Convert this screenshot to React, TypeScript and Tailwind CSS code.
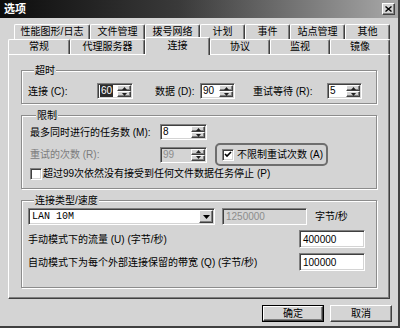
import type { ReactNode } from "react";

const sunken =
  "border border-[#808080] border-r-white border-b-white shadow-[inset_1px_1px_0_#404040,inset_-1px_-1px_0_#d4d4d4]";
const raised =
  "border border-white border-r-[#404040] border-b-[#404040] shadow-[inset_-1px_-1px_0_#808080]";

function Arrow({ up }: { up?: boolean }) {
  return (
    <svg width="5" height="3" viewBox="0 0 5 3">
      <path d={up ? "M2.5 0 L5 3 L0 3 Z" : "M0 0 L5 0 L2.5 3 Z"} fill="#202020" />
    </svg>
  );
}

function Spin({
  value,
  className,
  selected,
  disabled,
}: {
  value: string;
  className: string;
  selected?: boolean;
  disabled?: boolean;
}) {
  return (
    <div className={`flex h-[16px] ${className} ${sunken} ${disabled ? "bg-[#d4d4d4]" : "bg-white"}`}>
      <div className="flex flex-1 items-center pl-[2px] text-[10px] leading-none">
        <span
          className={
            selected
              ? "bg-[#2b2b2b] px-[1px] py-[1px] text-white"
              : disabled
                ? "text-[#8c8c8c]"
                : "text-black"
          }
        >
          {value}
        </span>
      </div>
      <div className="flex w-[15px] flex-col py-[1px] pr-[1px]">
        <div className={`flex flex-1 items-center justify-center bg-[#d4d4d4] ${raised}`}>
          <Arrow up />
        </div>
        <div className={`flex flex-1 items-center justify-center bg-[#d4d4d4] ${raised}`}>
          <Arrow />
        </div>
      </div>
    </div>
  );
}

function Check({ checked }: { checked?: boolean }) {
  return (
    <div className={`flex h-[12px] w-[12px] shrink-0 items-center justify-center bg-white ${sunken}`}>
      {checked && (
        <svg width="8" height="7" viewBox="0 0 8 7">
          <path d="M1 3 L3 5 L7 1" stroke="#000" strokeWidth="1.6" fill="none" />
        </svg>
      )}
    </div>
  );
}

function Group({ title, className, children }: { title: string; className: string; children: ReactNode }) {
  return (
    <fieldset
      className={`mx-[12px] border border-[#8c8c8c] shadow-[1px_1px_0_#fff,inset_1px_1px_0_#fff] ${className}`}
    >
      <legend className="ml-[6px] bg-[#d4d4d4] px-[1px] text-[10px] leading-[13px]">{title}</legend>
      {children}
    </fieldset>
  );
}

function Tab({ label, className, active }: { label: string; className: string; active?: boolean }) {
  return (
    <div
      className={`flex items-center justify-center rounded-t-[2px] border-t border-l border-r border-t-white border-l-white border-r-[#404040] bg-[#d4d4d4] text-[10px] leading-none shadow-[inset_-1px_0_0_#808080] ${className} ${
        active ? "relative z-10 -mt-[2px] -mb-[1px] h-[18px] pb-[2px]" : "h-[15px]"
      }`}
    >
      {label}
    </div>
  );
}

function Button({ label, def }: { label: string; def?: boolean }) {
  return (
    <div className={`h-[17px] w-[62px] ${def ? "border border-black" : ""}`}>
      <div className={`flex h-full w-full items-center justify-center bg-[#d4d4d4] text-[10px] ${raised}`}>
        {label}
      </div>
    </div>
  );
}

export default function App() {
  return (
    <div className="h-[328px] w-[400px] overflow-hidden border-r-2 border-b-2 border-r-[#404040] border-b-[#404040] bg-[#d4d4d4] font-['Liberation_Sans','Noto_Sans_CJK_SC',sans-serif] text-black">
      <div className="flex h-[18px] items-center justify-between bg-[linear-gradient(90deg,#0c0c0c_0%,#3a3a3a_45%,#a8a8a8_100%)] pr-[3px] pl-[4px]">
        <span className="text-[11px] leading-none font-bold text-white">选项</span>
        <div className={`flex h-[12px] w-[13px] items-center justify-center bg-[#d4d4d4] ${raised}`}>
          <svg width="7" height="6" viewBox="0 0 7 6">
            <path d="M0.5 0.5 L6.5 5.5 M6.5 0.5 L0.5 5.5" stroke="#000" strokeWidth="1.4" />
          </svg>
        </div>
      </div>

      <div className="pt-[6px]">
        <div className="flex pl-[14px]">
          <Tab label="性能图形/日志" className="w-[76px]" />
          <Tab label="文件管理" className="w-[55px]" />
          <Tab label="拨号网络" className="w-[55px]" />
          <Tab label="计划" className="w-[45px]" />
          <Tab label="事件" className="w-[45px]" />
          <Tab label="站点管理" className="w-[55px]" />
          <Tab label="其他" className="w-[45px]" />
        </div>
        <div className="flex items-end pl-[8px]">
          <Tab label="常规" className="w-[62px]" />
          <Tab label="代理服务器" className="w-[75px]" />
          <Tab label="连接" className="w-[65px]" active />
          <Tab label="协议" className="w-[60px]" />
          <Tab label="监视" className="w-[60px]" />
          <Tab label="镜像" className="w-[60px]" />
        </div>

        <div className="mx-[8px] border border-white border-r-[#404040] border-b-[#404040] pt-[9px] pb-[10px] text-[10px] shadow-[inset_-1px_-1px_0_#808080]">
          <Group title="超时" className="pt-[6px] pb-[4px] pl-[6px]">
            <div className="flex h-[16px] items-center">
              <span className="w-[69px]">连接 (C):</span>
              <Spin value="60" className="w-[36px]" selected />
              <span className="ml-[22px] w-[45px]">数据 (D):</span>
              <Spin value="90" className="w-[35px]" />
              <span className="ml-[18px] w-[74px]">重试等待 (R):</span>
              <Spin value="5" className="w-[35px]" />
            </div>
          </Group>

          <Group title="限制" className="mt-[5px] pt-[2px] pb-[8px] pl-[8px]">
            <div className="flex h-[16px] items-center">
              <span className="w-[130px]">最多同时进行的任务数 (M):</span>
              <Spin value="8" className="w-[47px]" />
            </div>
            <div className="mt-[3px] flex h-[23px] items-center">
              <span className="w-[130px] text-[#7c7c7c]">重试的次数 (R):</span>
              <Spin value="99" className="w-[47px]" disabled />
              <div className="ml-[8px] flex h-[23px] w-[113px] items-center gap-[3px] rounded-[5px] border-2 border-[#6e6e6e] pl-[5px]">
                <Check checked />
                <span>不限制重试次数 (A)</span>
              </div>
            </div>
            <div className="mt-[1px] flex h-[13px] items-center gap-[1px]">
              <Check />
              <span>超过99次依然没有接受到任何文件数据任务停止 (P)</span>
            </div>
          </Group>

          <Group title="连接类型/速度" className="mt-[5px] pt-[1px] pr-[11px] pb-[16px] pl-[6px]">
            <div className="flex h-[17px] items-center">
              <div className={`flex h-[17px] w-[187px] bg-white ${sunken}`}>
                <div className="flex flex-1 items-center pl-[3px] font-['Liberation_Mono',monospace] text-[10px]">
                  LAN 10M
                </div>
                <div className={`m-[1px] flex w-[14px] items-center justify-center bg-[#d4d4d4] ${raised}`}>
                  <svg width="7" height="4" viewBox="0 0 7 4">
                    <path d="M0 0 L7 0 L3.5 4 Z" fill="#000" />
                  </svg>
                </div>
              </div>
              <div className={`ml-[7px] flex h-[17px] w-[85px] items-center bg-[#d4d4d4] pl-[3px] text-[#8c8c8c] ${sunken}`}>
                1250000
              </div>
              <span className="ml-[8px]">字节/秒</span>
            </div>
            <div className="mt-[5px] flex h-[18px] items-center justify-between">
              <span>手动模式下的流量 (U) (字节/秒)</span>
              <div className={`flex h-[18px] w-[66px] items-center bg-white pl-[3px] ${sunken}`}>400000</div>
            </div>
            <div className="mt-[5px] flex h-[18px] items-center justify-between">
              <span>自动模式下为每个外部连接保留的带宽 (Q) (字节/秒)</span>
              <div className={`flex h-[18px] w-[66px] items-center bg-white pl-[3px] ${sunken}`}>100000</div>
            </div>
          </Group>
        </div>

        <div className="mt-[6px] flex justify-end gap-[6px] pr-[6px]">
          <Button label="确定" def />
          <Button label="取消" />
        </div>
      </div>
    </div>
  );
}
